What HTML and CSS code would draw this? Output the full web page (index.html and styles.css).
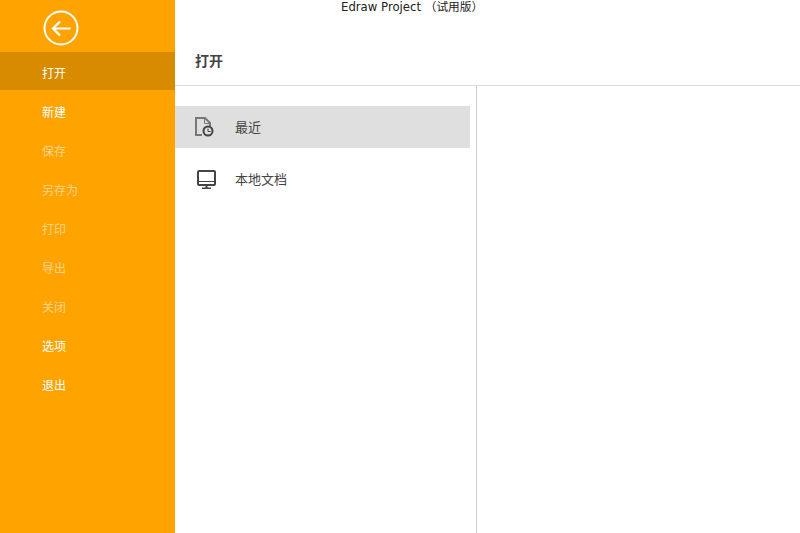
FILE: index.html
```html
<!DOCTYPE html>
<html lang="zh-CN">
<head>
  <title>Edraw Project</title>
  <meta charset="UTF-8">
  <link rel="stylesheet" href="styles.css">
</head>
<body>
  <div class="sidebar">
    <div class="back">
      <svg width="36" height="36" viewBox="0 0 36 36" fill="none" stroke="#fff">
        <circle cx="18" cy="18" r="16.5" stroke-width="2"/>
        <path d="M27.5 18.5H10M17 11.5L10 18.5L17 25.5" stroke-width="2.2"/>
      </svg>
    </div>
    <div class="menu-item active">打开</div>
    <div class="menu-item">新建</div>
    <div class="menu-item disabled">保存</div>
    <div class="menu-item disabled">另存为</div>
    <div class="menu-item disabled">打印</div>
    <div class="menu-item disabled">导出</div>
    <div class="menu-item disabled">关闭</div>
    <div class="menu-item">选项</div>
    <div class="menu-item">退出</div>
  </div>
  <div class="content">
    <div class="title">Edraw Project （试用版）</div>
    <div class="page-head">打开</div>
    <div class="panes">
      <div class="places">
        <div class="place selected">
          <svg width="20" height="20" viewBox="0 0 20 20" fill="none">
            <path d="M7 18H1V1H10L15 6V9" stroke="#777" stroke-width="2"/>
            <path d="M9.5 1V6.5H15" stroke="#777" stroke-width="1"/>
            <circle cx="13" cy="14" r="4.5" fill="#dfdfdf" stroke="#444" stroke-width="2"/>
            <path d="M13 11.5V14.5H15.5" stroke="#444" stroke-width="1"/>
          </svg>
          <span>最近</span>
        </div>
        <div class="place">
          <svg class="monitor" width="20" height="20" viewBox="0 0 20 20" fill="none" stroke="#444">
            <rect x="1" y="2" width="17" height="14" rx="1" stroke-width="2"/>
            <path d="M1 12.5H18" stroke-width="1"/>
            <path d="M9.5 16V19M5 19.5H14" stroke-width="2"/>
          </svg>
          <span>本地文档</span>
        </div>
      </div>
      <div class="preview"></div>
    </div>
  </div>
</body>
</html>
```

FILE: styles.css
```css
html, body {
  height: 100%;
}

body {
  margin: 0;
  display: flex;
  overflow: hidden;
  background: #fff;
  font-family: "Noto Sans CJK SC", "Liberation Sans", sans-serif;
  font-size: 13px;
}

/* sidebar */
.sidebar {
  width: 175px;
  flex-shrink: 0;
  background: #ffa300;
  font-size: 12px;
}

.back {
  height: 52px;
  padding: 10px 0 0 43px;
  box-sizing: border-box;
}

.back svg {
  display: block;
}

.menu-item {
  height: 39px;
  line-height: 43px;
  padding-left: 42px;
  color: #fff;
}

.menu-item.active {
  height: 38px;
  line-height: 42px;
  background: #d98b00;
}

.menu-item.disabled {
  color: #ffd488;
}

/* right side */
.content {
  flex: 1;
  display: flex;
  flex-direction: column;
  min-width: 0;
}

.title {
  height: 15px;
  line-height: 15px;
  padding-left: 166px;
  font-family: "DejaVu Sans", "Noto Sans CJK SC", sans-serif;
  font-size: 11.7px;
  color: #222;
}

.page-head {
  height: 71px;
  line-height: 90px;
  box-sizing: border-box;
  padding-left: 20px;
  border-bottom: 1px solid #dcdcdc;
  font-size: 14px;
  font-weight: bold;
  color: #444;
}

.panes {
  flex: 1;
  display: flex;
}

.places {
  width: 301px;
  padding-top: 20px;
  border-right: 1px solid #cfcfcf;
}

.place {
  width: 295px;
  height: 42px;
  margin-bottom: 10px;
  padding-left: 20px;
  box-sizing: border-box;
  display: flex;
  align-items: center;
  gap: 20px;
  color: #444;
}

.place span {
  margin-bottom: 2px;
}

.monitor {
  margin-left: 2px;
  margin-right: -2px;
}

.place.selected {
  background: #dfdfdf;
}

.preview {
  flex: 1;
}
```
